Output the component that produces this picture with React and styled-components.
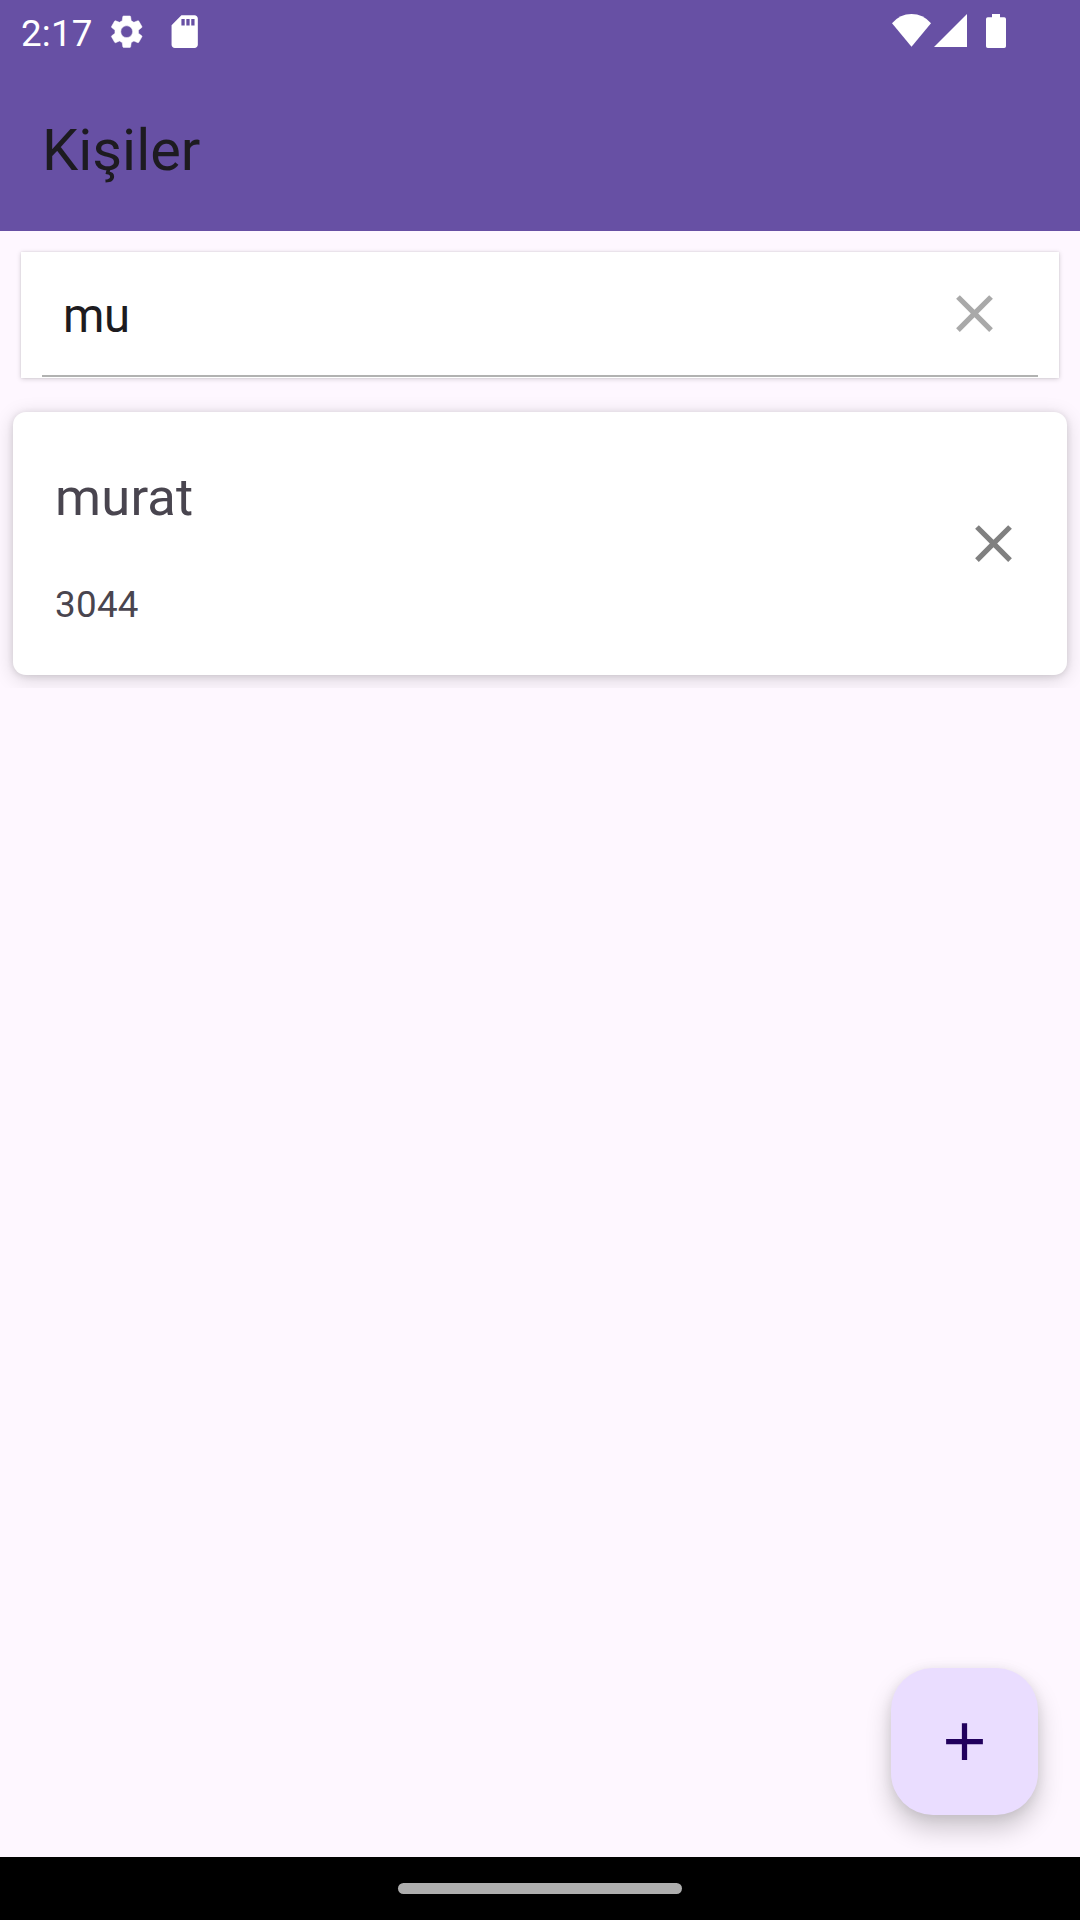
import React from "react";
import styled, { createGlobalStyle } from "styled-components";

const GlobalStyle = createGlobalStyle`
  * { box-sizing: border-box; }
  body {
    margin: 0;
    background: #fef7ff;
    font-family: Roboto, "Noto Sans", sans-serif;
    overflow: hidden;
  }
`;

const Screen = styled.div`
  display: flex;
  flex-direction: column;
  width: 1080px;
  height: 1920px;
  background: #fef7ff;
`;

const Header = styled.header`
  height: 231px;
  background: #6750a4;
`;

const StatusBar = styled.div`
  display: flex;
  justify-content: space-between;
  height: 63px;
  padding: 12px 74px 0 21px;
  color: #fff;
`;

const StatusGroup = styled.div`
  display: flex;
  align-items: flex-start;
`;

const Clock = styled.span`
  width: 86.4px;
  font-size: 36.75px;
  line-height: 43px;
  letter-spacing: 0.2px;
`;

const StatusIcon = styled.svg`
  display: block;
  width: ${(p) => p.$w}px;
  height: ${(p) => p.$h}px;
  margin-left: ${(p) => p.$gap || 0}px;
  margin-top: ${(p) => p.$top || 0}px;
  fill: currentColor;
`;

const Title = styled.h1`
  margin: 0;
  padding: 53px 42px 0;
  color: #1d1b20;
  font-size: 57.75px;
  font-weight: 400;
  line-height: 68px;
`;

const Main = styled.main`
  display: flex;
  flex: 1;
  flex-direction: column;
  padding-top: 21px;
`;

const SearchBox = styled.div`
  height: 126px;
  margin: 0 21px;
  padding: 0 21px;
  background: #fff;
  box-shadow: 0 1px 5px rgba(0, 0, 0, 0.17), 0 0 2px rgba(0, 0, 0, 0.1);
`;

const SearchField = styled.div`
  display: flex;
  align-items: center;
  justify-content: space-between;
  height: 125px;
  padding: 0 32px 0 21px;
  border-bottom: 2px solid #b1b2b1;
`;

const Query = styled.span`
  padding-top: 5px;
  color: #1d1b20;
  font-size: 47.25px;
  line-height: 56px;
  letter-spacing: -0.5px;
`;

const IconButton = styled.button`
  display: block;
  width: 63px;
  height: 63px;
  padding: 0;
  border: 0;
  background: none;
  color: ${(p) => p.$color};
`;

const Glyph = styled.svg`
  display: block;
  width: 63px;
  height: 63px;
  fill: currentColor;
`;

const ListItem = styled.div`
  margin-top: 10px;
  padding: 24px 13px 13px;
  overflow: hidden;
`;

const Card = styled.article`
  display: flex;
  align-items: center;
  justify-content: space-between;
  height: 263px;
  padding: 0 42px;
  border-radius: 13px;
  background: #fff;
  box-shadow: 0 4px 20px rgba(0, 0, 0, 0.15), 0 1px 7px rgba(0, 0, 0, 0.12);
`;

const CardText = styled.div`
  display: flex;
  flex-direction: column;
  gap: 55px;
  padding-top: 5px;
  color: #49454f;
`;

const Name = styled.span`
  font-size: 52.5px;
  line-height: 62px;
  letter-spacing: 0.2px;
`;

const Phone = styled.span`
  font-size: 36.75px;
  line-height: 43px;
  letter-spacing: 0.3px;
`;

const Fab = styled.button`
  display: flex;
  align-items: center;
  justify-content: center;
  width: 147px;
  height: 147px;
  margin: auto 42px 42px auto;
  padding: 0;
  border: 0;
  border-radius: 42px;
  background: #eaddff;
  color: #21005d;
  box-shadow: 0 14px 26px rgba(0, 0, 0, 0.2), 0 2px 12px rgba(0, 0, 0, 0.08);
`;

const NavBar = styled.footer`
  display: flex;
  justify-content: center;
  height: 63px;
  padding-top: 26px;
  background: #000;
`;

const Handle = styled.div`
  width: 284px;
  height: 11px;
  border-radius: 6px;
  background: #aeaeae;
`;

const CloseGlyph = () => (
  <Glyph viewBox="0 0 24 24">
    <path d="M19 6.41 17.59 5 12 10.59 6.41 5 5 6.41 10.59 12 5 17.59 6.41 19 12 13.41 17.59 19 19 17.59 13.41 12z" />
  </Glyph>
);

export default function App() {
  return (
    <>
      <GlobalStyle />
      <Screen>
        <Header>
          <StatusBar>
            <StatusGroup>
              <Clock>2:17</Clock>
              <StatusIcon viewBox="0 0 24 24" $w={39.4} $h={39.4}>
                <path d="M19.14 12.94c.04-.3.06-.61.06-.94 0-.32-.02-.64-.07-.94l2.03-1.58c.18-.14.23-.41.12-.61l-1.92-3.32c-.12-.22-.37-.29-.59-.22l-2.39.96c-.5-.38-1.03-.7-1.62-.94l-.36-2.54c-.04-.24-.24-.41-.48-.41h-3.84c-.24 0-.43.17-.47.41l-.36 2.54c-.59.24-1.13.57-1.62.94l-2.39-.96c-.22-.08-.47 0-.59.22L2.74 8.87c-.12.21-.08.47.12.61l2.03 1.58c-.05.3-.07.62-.07.94s.02.64.07.94l-2.03 1.58c-.18.14-.23.41-.12.61l1.92 3.32c.12.22.37.29.59.22l2.39-.96c.5.38 1.03.7 1.62.94l.36 2.54c.05.24.24.41.48.41h3.84c.24 0 .44-.17.47-.41l.36-2.54c.59-.24 1.13-.56 1.62-.94l2.39.96c.22.08.47 0 .59-.22l1.92-3.32c.12-.22.07-.47-.12-.61l-2.01-1.58zM12 15.6c-1.98 0-3.6-1.62-3.6-3.6s1.62-3.6 3.6-3.6 3.6 1.62 3.6 3.6-1.62 3.6-3.6 3.6z" stroke="currentColor" strokeWidth="0.3" />
              </StatusIcon>
              <StatusIcon viewBox="0 0 24 24" $w={39.4} $h={39.4} $gap={18.3}>
                <path d="M18 2h-8L4 8v12c0 1.1.9 2 2 2h12c1.1 0 2-.9 2-2V4c0-1.1-.9-2-2-2zm-6 6.2h-2V4.3h2v3.9zm3 0h-2V4.3h2v3.9zm3 0h-2V4.3h2v3.9z" />
              </StatusIcon>
            </StatusGroup>
            <StatusGroup>
              <StatusIcon viewBox="0 0 39 33" $w={39} $h={33} $top={2}>
                <path d="M19.5 32.8 0 9.2Q8 0 19.5 0T39 9.2z" />
              </StatusIcon>
              <StatusIcon viewBox="0 0 33 33" $w={33} $h={33} $gap={3} $top={2}>
                <path d="M0 33 33 0v33z" />
              </StatusIcon>
              <StatusIcon viewBox="0 0 20 34" $w={20} $h={34} $gap={19} $top={2}>
                <path d="M6 0h8v3.3h4.2Q20 3.3 20 5v27.2Q20 34 18.2 34H1.8Q0 34 0 32.2V5Q0 3.3 1.8 3.3H6z" />
              </StatusIcon>
            </StatusGroup>
          </StatusBar>
          <Title>Kişiler</Title>
        </Header>
        <Main>
          <SearchBox>
            <SearchField>
              <Query>mu</Query>
              <IconButton $color="#a9a9a9" aria-label="Temizle">
                <CloseGlyph />
              </IconButton>
            </SearchField>
          </SearchBox>
          <ListItem>
            <Card>
              <CardText>
                <Name>murat</Name>
                <Phone>3044</Phone>
              </CardText>
              <IconButton $color="#808080" aria-label="Sil">
                <CloseGlyph />
              </IconButton>
            </Card>
          </ListItem>
          <Fab aria-label="Ekle">
            <Glyph viewBox="0 0 24 24">
              <path d="M19 13h-6v6h-2v-6H5v-2h6V5h2v6h6z" />
            </Glyph>
          </Fab>
        </Main>
        <NavBar>
          <Handle />
        </NavBar>
      </Screen>
    </>
  );
}
